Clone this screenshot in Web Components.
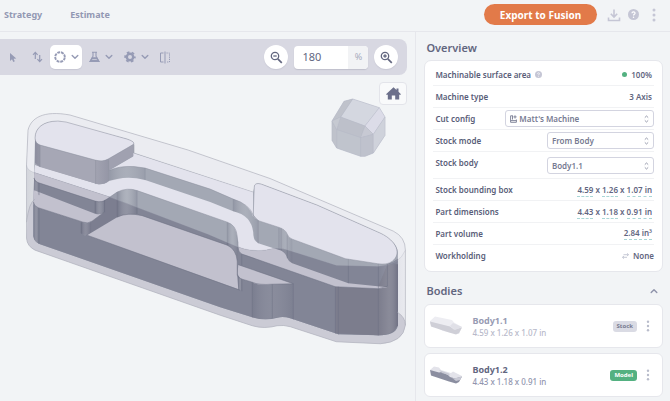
<!DOCTYPE html>
<html lang="en">
<head>
<meta charset="utf-8">
<title>Part overview</title>
<style>
  :root {
    --ink: #62667f;
    --muted: #9298b3;
    --line: #e6e7ec;
    --page: #f2f4f6;
    --bar: #d8d8e2;
  }
  body { margin: 0; background: var(--page); color: var(--ink); font: 600 8px/14px "Noto Sans", sans-serif; }
</style>
</head>
<body>
<cam-app></cam-app>
<script>
const base = `
  *, *::before { box-sizing: border-box; }
  button, input, select { font: inherit; color: inherit; margin: 0; padding: 0; border: 0; background: none; border-radius: 0; outline-offset: 1px; }
  button { cursor: pointer; display: inline-flex; align-items: center; justify-content: center; }
  a { color: inherit; text-decoration: none; }
  h2, h3, p { margin: 0; font: inherit; }
  svg { display: block; flex: none; }
`;
const define = (name, render) => customElements.define(name, class extends HTMLElement {
  connectedCallback() {
    if (this.shadowRoot) return;
    const root = this.attachShadow({ mode: 'open' });
    const tpl = document.createElement('template');
    tpl.innerHTML = `<style>${base}</style>` + render(this);
    root.append(tpl.content.cloneNode(true));
  }
});
const dots = `<svg width="4" height="14" viewBox="0 0 4 14" fill="currentColor"><circle cx="2" cy="2" r="1.5"/><circle cx="2" cy="7" r="1.5"/><circle cx="2" cy="12" r="1.5"/></svg>`;
const chevron = `<svg width="8" height="6" viewBox="0 0 8 6" fill="none" stroke="currentColor" stroke-width="1.4" stroke-linecap="round" stroke-linejoin="round"><path d="M1.2 1.5 4 4.3 6.8 1.5"/></svg>`;

define('app-header', () => `
  <style>
    :host { display: flex; align-items: center; height: 32px; padding: 0 12px 2px 4px; border-bottom: 1px solid var(--line); }
    nav { display: flex; gap: 28px; color: var(--muted); font-size: 9px; font-weight: 700; }
    .actions { display: flex; align-items: center; margin-left: auto; color: #c5c6d5; }
    .export { height: 21px; width: 113px; border-radius: 11px; background: #e27a49; color: #fff; font-weight: 700; font-size: 10px; margin-right: 10px; }
    .help { margin: 0 11px 0 7px; }
    .more { width: 8px; }
  </style>
  <nav><a href="#strategy">Strategy</a><a href="#estimate">Estimate</a></nav>
  <div class="actions">
    <button class="export">Export to Fusion</button>
    <button aria-label="Download"><svg width="14" height="14" viewBox="0 0 14 14" fill="none" stroke="currentColor" stroke-width="1.6"><path d="M7 1.5v7M3.8 5.8 7 9l3.2-3.2M1.5 9.5v3h11v-3"/></svg></button>
    <button class="help" aria-label="Help"><svg width="11" height="11" viewBox="0 0 12 12"><circle cx="6" cy="6" r="6" fill="currentColor"/><path d="M4.3 4.6C4.4 2.6 7.8 2.7 7.7 4.7 7.6 5.8 6 5.8 6 7.2" fill="none" stroke="#fff" stroke-width="1.3"/><circle cx="6" cy="9" r=".8" fill="#fff"/></svg></button>
    <button class="more" aria-label="More">${dots}</button>
  </div>`);

define('view-toolbar', () => `
  <style>
    :host { display: flex; align-items: center; height: 36px; margin-right: 8px; padding: 0 9px 0 6px; border-radius: 0 8px 8px 0; background: var(--bar); color: #969bb5; }
    .tools { display: flex; align-items: center; }
    .tools button { height: 24px; gap: 5px; }
    .cursor { width: 14px; } .swap { width: 14px; margin: 0 6px 0 10px; }
    .tools .active { width: 32px; background: #fff; border-radius: 5px; margin-right: 7px; box-shadow: 0 1px 1px #c8c8d4; }
    .menu { width: 24px; margin-right: 11px; }
    .zoom { display: flex; align-items: center; gap: 6px; margin-left: auto; color: var(--ink); }
    .round { width: 24px; height: 24px; border-radius: 50%; background: #fff; box-shadow: 0 1px 1px #c8c8d4; }
    .field { display: flex; width: 74px; height: 23px; border-radius: 4px; overflow: hidden; background: #fff; box-shadow: 0 1px 1px #c0c0cc; }
    input { flex: 1; min-width: 0; padding: 0 0 0 8px; font-size: 11px; font-weight: 400; }
    .unit { width: 20px; display: grid; place-items: center; background: #f2f3f5; color: #a8abbd; font-size: 9px; font-weight: 400; }
  </style>
  <div class="tools" role="toolbar" aria-label="View tools">
    <button class="cursor" aria-label="Select"><svg width="8" height="11" viewBox="0 0 8 11"><path d="M1 1v8l2-1.8L4.3 10l1.5-.7L4.6 6.7l2.7-.2z" fill="currentColor"/></svg></button>
    <button class="swap" aria-label="Flip"><svg width="11" height="12" viewBox="0 0 11 12" fill="none" stroke="currentColor" stroke-width="1.2"><path d="M3.3 8V1.5M1 3.8l2.3-2.4 2.3 2.4M7.7 4v6.5M5.4 8.2l2.3 2.4L10 8.2"/></svg></button>
    <button class="active" aria-label="Rotate"><svg width="12" height="12" viewBox="0 0 12 12" fill="none" stroke="currentColor" stroke-width="1.9"><circle cx="6" cy="6" r="4.8" stroke-dasharray="2.9 .87" stroke-dashoffset="-.43"/></svg>${chevron}</button>
    <button class="menu" aria-label="Analysis"><svg width="11" height="12" viewBox="0 0 11 12" fill="none" stroke="currentColor" stroke-width="1.1"><path d="M3 1.2h5M4 1.2v4L1 10.5h9L7 5.2v-4"/><path d="M3.2 6.8h4.6l2 3.7H1.2z" fill="currentColor"/><path d="M3.2 8.5h4.6" stroke="#d8d8e2" stroke-width=".7"/></svg>${chevron}</button>
    <button class="menu" aria-label="Settings"><svg width="12" height="12" viewBox="0 0 12 12" fill="none" stroke="currentColor"><circle cx="6" cy="6" r="3.2" stroke-width="2.4"/><circle cx="6" cy="6" r="4.8" stroke-width="1.8" stroke-dasharray="2.6 2.427" stroke-dashoffset="1.3"/></svg>${chevron}</button>
    <button aria-label="Mirror"><svg width="12" height="13" viewBox="0 0 12 13" fill="none" stroke="currentColor"><path d="M4.5 2H1.5v9h3M6 .5v12"/><path d="M7.5 2h3v9h-3" stroke-dasharray="1.2 1"/></svg></button>
  </div>
  <div class="zoom">
    <button class="round" aria-label="Zoom out"><svg width="13" height="13" viewBox="0 0 13 13" fill="none" stroke="currentColor" stroke-width="1.3"><circle cx="5" cy="5" r="3.7"/><path d="M3.3 5h3.4"/><path d="m7.8 7.8 4 4" stroke-width="1.7"/></svg></button>
    <div class="field"><input aria-label="Zoom percentage" value="180"><span class="unit">%</span></div>
    <button class="round" aria-label="Zoom in"><svg width="13" height="13" viewBox="0 0 13 13" fill="none" stroke="currentColor" stroke-width="1.3"><circle cx="5" cy="5" r="3.7"/><path d="M3.3 5h3.4M5 3.3v3.4"/><path d="m7.8 7.8 4 4" stroke-width="1.7"/></svg></button>
  </div>`);

define('model-view', () => `
  <style>
    :host { display: block; position: relative; }
    .scene { width: 100%; height: auto; }
    .upper { --face: #e3e3ed; --wall: #a3a8b4; --side: #a6a7b5; --edge: #8b8f9d; }
    .lower { --face: #c2c1ce; --wall: #828596; --side: #7c7d8d; --edge: #6d7082; }
    .home { position: absolute; top: 7px; right: 8px; width: 28px; height: 23px; background: #f9fafb; border: 1px solid #e3e4ea; border-radius: 4px; color: #6c708b; }
    .cube { position: absolute; top: 22px; right: 28px; }
  </style>
  <svg class="scene" viewBox="0 75 415 320" role="img" aria-label="Part inside its stock">
    <defs>
      <linearGradient id="round"><stop offset="0" stop-color="#50536a" stop-opacity=".3"/><stop offset=".5" stop-color="#fff" stop-opacity=".12"/><stop offset="1" stop-color="#50536a" stop-opacity=".2"/></linearGradient>
      <linearGradient id="end"><stop offset="0" stop-color="#fff" stop-opacity="0"/><stop offset=".5" stop-color="#fff" stop-opacity=".1"/><stop offset="1" stop-color="#50536a" stop-opacity=".3"/></linearGradient>
      <linearGradient id="hull"><stop offset="0" stop-color="#d4d6dc"/><stop offset=".04" stop-color="#dfe1e6"/><stop offset=".96" stop-color="#dfe0e6"/><stop offset="1" stop-color="#e9eaef"/></linearGradient>
      <clipPath id="front"><path d="M20 163H26.5Q27 171 36 173L110 197 208 234 236 246Q250 252 265 250L272 248.500Q280 247 290 250.500L336 265 378 266Q397 264 404 250H410V350H20z"/></clipPath>
      <g id="part">
        <path fill="var(--wall)" d="M35 138C35 128 43 121 58 121L127 139Q134 141 134 145V153L253 192 254 187Q255 182 261 184L317 205 380 233Q397 242 397.500 252V325C396 333 388 335 378 335L338 334 290 318Q283 316 277 317.500 264 321 252 317L220 307 40 244Q33 241 33.500 235V203L34 178z"/>
        <path fill="var(--side)" d="M335 286H378L387 264H397.500V325Q392 335 378 335L335 333z"/>
        <path fill="url(#end)" d="M378 264H397.500V325Q392 335 378 335z"/>
        <path fill="var(--face)" d="M109 170.500Q119 165.500 134 166.500L145 168 210 189 233 199Q249 204 253 217V192L133 153V156.500z"/>
        <path fill="var(--face)" d="M35 165 97 184Q104 185 108 181L117 179Q130 176 145 180L210 202 233 211Q251 215 253 232 253 241 258 243L278 249.500Q285 251 287 258 288 261 292 263L348 283 387 287 378 288.500 335 286.500 241 253.500Q237 251 238 242C236 232 236 225 227 222L210 216 137 190.500Q127 187 117 192L107 199Q102 203 95 201L38 182.500Q34 180 34 176z"/>
        <path fill="var(--face)" stroke="var(--edge)" stroke-width=".5" d="M254 187Q254 182 261 184L317 205 380 233C397 241 401 254 392 261Q387 265 377 263.500L345 258.500 292 239Q288 238 287 234 285 229 278 227L258 220.500Q254 219 253 215z"/>
        <path fill="var(--face)" d="M33.500 190 95 213.500Q101 215 104 212L92 221Q88 224 83 222L38 207.500Q34 206 33.500 202z"/>
        <path fill="var(--face)" d="M87 235 117 217Q127 212 142 215.500L227 245Q236 249 237 261V275L238 289z"/>
        <path fill="var(--face)" d="M238 264.500 293 283.500 272 284Q258 286 252 282L242 279Q238 277 237.500 273z"/>
        <path fill="#50536a" fill-opacity=".12" d="M81 222Q88 226 92 221L104 212 104 200 117 192V217L87 235 81 233z"/>
        <path fill="url(#round)" d="M81 222Q86 224 91 221V232L85 235.500 81 233.500z"/>
        <path fill="url(#round)" d="M95 201Q101 203 104.500 200V212Q101 215 95 213z"/>
        <path fill="url(#round)" d="M33.500 204 39 208V243.500Q34 241 33.500 236zM34 179 39 183V195L34 191z"/>
        <path fill="url(#round)" d="M117 192Q126 187 137 190.500V214.500Q126 213 117 217z"/>
        <path fill="url(#round)" d="M109 170.500Q121 165 145 168V180Q129 176 109 181z" opacity=".6"/>
        <path fill="url(#round)" d="M233 199Q248 203 253 215L258 220V243Q253 241 253 232 251 216 233 211z" opacity=".7"/>
        <path fill="url(#round)" d="M227 222Q237 226 237 236L238 247 237 262Q236 249 227 245z" opacity=".7"/>
        <path fill="url(#round)" d="M278 227Q285 229 287 234L292 239V263Q288 261 287 257 284 250 278 249z" opacity=".6"/>
        <path fill="url(#round)" d="M252 282Q260 285 272 284L293 283.500V319Q282 315 272 318 262 320 252 317z" opacity=".5"/>
        <path fill="url(#round)" d="M238 276 242 279V291L238 289z"/>
        <path fill="var(--side)" d="M35 138Q36 144 40 145L95 160Q103 162 108 159L133 144V156L109 170V181Q104 185 97 184L40 167Q35 165 35 163z"/>
        <path fill="url(#round)" d="M35 138 40 145V167L35 163zM96 160Q103 162 108.500 158V181Q104 185 96 184z"/>
        <path fill="#8e91a4" fill-opacity=".25" d="M108.500 158.500 133.500 143V156L108.500 170.500z"/>
        <path fill="var(--face)" stroke="var(--edge)" stroke-width=".5" d="M35 138C35 128 43 121 58 121L66 122 127 139Q136 142 133 144.500L108 159Q103 162 95 160L40 145Q35 143 35 138z"/>
        <g fill="none" stroke="var(--edge)" stroke-width=".5">
          <path d="M134 144V153L253 192" opacity=".5"/>
          <path d="M109 170.500Q119 165.500 134 166.500L145 168 210 189 233 199Q249 204 253 215L258 220.500M34 178Q34 181 38 182.500L95 201Q102 203 107 199L117 192Q127 187 137 190.500L227 222Q236 225 237 236L238 247Q238 252 242 254L335 286.500 378 288.500 387 286V264M33.500 202Q34 206 38 207.500L83 222Q88 224 92 221L104 212M87 235 240 290M117 217Q127 212 142 215.500L227 245Q236 249 237 261V275Q238 278 242 279L252 282Q258 285 272 284L293 283.500V319M238 264.500 293 283.500"/>
          <path d="M145 168V180M137 190.500V214M117 192V217M233 199V211M227 222V245M252 282V317M272 284V318M335 286.500V333M338 286.500V334M378 264V335M348 259V283M258 220V243M281 228V250M287 235V258M39 208V243.500M39 183V195M40 145V167M95.500 160V184M108.500 160V181M81 222V233M95 201V213M104.500 200V212M241.500 279V291M241.500 254V265"/>
        </g>
      </g>
    </defs>
    <path fill="url(#hull)" d="M26.500 165 28 130C31 118 43 110 70 115L188 150 270 178.500 393 231Q405 237 405 250V325Q403 342 380 343.500L336 341.500 290 326.500Q283 324.500 277 325.500 264 329 252 325.500L220 315 35 250Q27 246 26.500 238z"/>
    <path fill="#ebecf1" d="M26.500 165 28 130C31 118 43 110 70 115L188 150 270 178.500 393 231Q405 237 405 250 399 265 378 266L336 265 290 250.500Q280 247 272 248.500L265 250Q250 252 236 246L208 234 110 197 36 173Q27 171 26.500 165z"/>
    <path fill="#cbcbd5" d="M26.500 238 28 212Q30 201 36 199L397 312Q405 317 405 325 403 342 380 343.500L336 341.500 290 326.500Q283 324.500 277 325.500 264 329 252 325.500L220 315 35 250Q27 246 26.500 238z"/>
    <use href="#part" class="upper"/>
    <g clip-path="url(#front)"><use href="#part" class="lower"/></g>
    <g fill="none" stroke="#a9abb7" stroke-width=".6">
      <path d="M26.500 165 28 130C31 118 43 110 70 115L188 150 270 178.500 393 231Q405 237 405 250V325Q403 342 380 343.500L336 341.500 290 326.500Q283 324.500 277 325.500 264 329 252 325.500L220 315 35 250Q27 246 26.500 238zM26.500 222Q29 202 35 199M397 312Q405 317 405 325"/>
      <path d="M26.500 165Q27 171 36 173L110 197 208 234 236 246Q250 252 265 250L272 248.500Q280 247 290 250.500L336 265 378 266Q399 265 405 250" opacity=".5"/>
    </g>
  </svg>
  <svg class="cube" width="57" height="61" viewBox="330 290 171 183" stroke="#b4b7c4" stroke-width="1" stroke-linejoin="round">
    <path fill="#c1c5cf" d="M398 296 372 303 336 362V420L350 443 422 468H435L460 458 495 405V350L478 322z"/>
    <path fill="#d4d7e0" d="M398 296 478 322 435 377 362 350z"/>
    <path fill="#dcdce8" d="M478 322 495 350 460 402 435 377z"/>
    <path fill="#bdc0ca" d="M362 350 435 377 422 412 350 388z"/>
    <path fill="#c7c9d3" d="M435 377 460 402 422 412z"/>
    <path fill="#c0c4cd" d="M350 388 422 412V468L350 443z"/>
    <path fill="#bfc2cd" d="M422 412 460 402V458L435 468H422z"/>
    <path fill="#cfd2db" d="M460 402 495 350V405L460 458z"/>
    <path fill="#bfc2cb" d="M336 362 350 388V443L336 420zM398 296 372 303 336 362 362 350z"/>
    <path fill="#c6c9d1" d="M336 362 362 350 350 388z"/>
  </svg>
  <button class="home" aria-label="Home view"><svg width="15" height="13" viewBox="0 0 15 13" fill="currentColor"><path d="M7.500.3 10.500 3V1.500h2v3.300L15 7.200l-1 .9-.8-.7V12.500H9.200V8.500H5.800v4H1.800V7.400L1 8.100 0 7.200z"/></svg></button>`);

define('info-card', () => `
  <style>:host { display: block; padding: 3px 8px 4px; background: #fff; border: 1px solid var(--line); border-radius: 7px; }</style>
  <slot></slot>`);

define('info-row', el => `
  <style>
    :host { display: flex; align-items: center; justify-content: space-between; height: 22px; padding: 0 2px; border-bottom: 1px solid #f1f2f4; }
    :host(:last-child) { border-bottom: 0; padding-right: 0; }
    .label, .value { display: flex; align-items: center; gap: 4px; white-space: nowrap; }
    .label { color: #595d78; }
  </style>
  <span class="label">${el.getAttribute('label')}<slot name="hint"></slot></span>
  <span class="value"><slot></slot></span>`);

define('select-row', el => `
  <style>
    :host { display: flex; align-items: center; justify-content: space-between; height: 22px; padding-left: 2px; border-bottom: 1px solid #f1f2f4; }
    :host([tall]) { height: 27px; align-items: stretch; padding-top: 5px; }
    label { color: #595d78; }
    :host([tall]) label { margin-top: -1px; }
    .box { display: grid; grid-template-columns: auto 1fr auto; align-items: center; width: ${el.hasAttribute('wide') ? '68%' : '49%'}; height: 17px; padding: 0 4px; border: 1px solid #d3d4e0; border-radius: 3px; color: #777b92; }
    select { grid-area: 1 / 1 / 2 / 4; appearance: none; width: 100%; height: 15px; padding-left: ${el.hasAttribute('wide') ? 9 : 0}px; }
    .lead { grid-area: 1 / 1; pointer-events: none; }
    .arrows { grid-area: 1 / 3; pointer-events: none; }
  </style>
  <label for="field">${el.getAttribute('label')}</label>
  <div class="box">
    <select id="field"><option>${el.getAttribute('value')}</option></select>
    ${el.hasAttribute('wide') ? '<svg class="lead" width="7" height="8" viewBox="0 0 7 8" fill="none" stroke="currentColor" stroke-width=".9"><path d="M3 .8H.6v6.500h5.800V4.500M2.500 1v3.500M.8 5.600h5.500M5 .3v3.200M3.400 1.900h3.200"/></svg>' : ''}
    <svg class="arrows" width="5" height="8" viewBox="0 0 5 8" fill="none" stroke="#8b8ea3" stroke-width=".9"><path d="M.8 2.600 2.500 1l1.700 1.600M.8 5.400 2.500 7l1.700-1.600"/></svg>
  </div>`);

define('unit-value', () => `
  <style>:host { display: inline-block; line-height: 12px; border-bottom: 1px dashed #a9d6d6; }</style><slot></slot>`);

define('section-title', () => `
  <style>
    :host { display: flex; align-items: center; justify-content: space-between; padding: 0 5px 0 2px; }
    h2 { font-size: 11px; line-height: 15px; font-weight: 600; }
  </style>
  <h2><slot></slot></h2><slot name="action"></slot>`);

define('body-card', el => `
  <style>
    :host { display: flex; align-items: center; gap: 9px; height: 44px; padding: 0 12px 0 4px; background: #fff; border: 1px solid var(--line); border-radius: 6px; }
    .text { flex: 1; }
    h3 { font-size: 9px; line-height: 12px; font-weight: 700; }
    p { font-size: 8px; line-height: 11px; font-weight: 500; color: #9195ae; }
    :host([tone=stock]) h3 { color: #979bb3; }
    :host([tone=stock]) p { color: #b7b9ca; }
    .tag { padding: 0 4px; border-radius: 3px; font-size: 6px; line-height: 11px; font-weight: 700; background: #54b181; color: #fff; }
    :host([tone=stock]) .tag { background: #dadbe4; color: #777a90; }
    button { color: #b9bccb; width: 4px; }
  </style>
  <svg width="34" height="22" viewBox="0 0 34 22">${el.getAttribute('tone') === 'stock'
    ? '<path fill="#ededf2" d="M1 6 6 1.500 23 5 25 7.500 33 12 30 19 14 16 1 9z"/><path fill="#cfcfd7" d="M1 6.500 21 11.500 25 14.500 33 12.500 30 18 27 19.500 20 17.500 2 11.500z"/><path fill="#e0e0e7" d="M21 11 24 8 33 12 26 15z"/>'
    : '<path fill="#e3e3ea" d="M1 6 5 2.500 10 3.500 12 6 22 9 24 7.500 33 12 29 15 22 15 3 8z"/><path fill="#8b8ea0" d="M1 6 10 8.500 13 8 19 11 21 13 26 14.500 33 12.500 30 18 27 19.500 20 17.500 2 11.500z"/><path fill="#c8c9d4" d="M22 13 25 14.500 33 12.500 31 16 27 17zM10 6 20 9.500 21 11.500 13 9z"/>'}</svg>
  <div class="text"><h3>${el.getAttribute('name')}</h3><p>${el.getAttribute('size')}</p></div>
  <span class="tag">${el.getAttribute('tag')}</span>
  <button aria-label="Options for ${el.getAttribute('name')}"><svg width="4" height="12" viewBox="0 0 4 14" fill="currentColor"><circle cx="2" cy="2" r="1.400"/><circle cx="2" cy="7" r="1.400"/><circle cx="2" cy="12" r="1.400"/></svg></button>`);

define('cam-app', () => `
  <style>
    :host { display: grid; grid-template: auto 1fr / minmax(0, 1fr) 38%; min-height: 100vh; }
    app-header { grid-column: 1 / 3; }
    main { padding-top: 7px; overflow: hidden; }
    aside { display: flex; flex-direction: column; padding: 8px 7px 4px 8px; border-left: 1px solid var(--line); }
    info-card { margin: 5px 0 11px; }
    section-title + body-card { margin-top: 6px; }
    body-card + body-card { margin-top: 5px; }
    .dot { width: 5px; height: 5px; border-radius: 50%; background: #54b181; }
    .collapse { color: #8f93aa; transform: rotate(180deg); }
  </style>
  <app-header></app-header>
  <main><view-toolbar></view-toolbar><model-view></model-view></main>
  <aside>
    <section-title>Overview</section-title>
    <info-card>
      <info-row label="Machinable surface area"><svg slot="hint" width="7" height="7" viewBox="0 0 12 12"><circle cx="6" cy="6" r="6" fill="#c5c6d5"/><path d="M4.300 4.600C4.400 2.600 7.800 2.700 7.700 4.700 7.600 5.800 6 5.800 6 7.200" fill="none" stroke="#fff" stroke-width="1.300"/><circle cx="6" cy="9" r=".8" fill="#fff"/></svg><span class="dot"></span>100%</info-row>
      <info-row label="Machine type">3 Axis</info-row>
      <select-row wide label="Cut config" value="Matt's Machine"></select-row>
      <select-row label="Stock mode" value="From Body"></select-row>
      <select-row tall label="Stock body" value="Body1.1"></select-row>
      <info-row label="Stock bounding box"><span><unit-value>4.59</unit-value> x <unit-value>1.26</unit-value> x <unit-value>1.07 in</unit-value></span></info-row>
      <info-row label="Part dimensions"><span><unit-value>4.43</unit-value> x <unit-value>1.18</unit-value> x <unit-value>0.91 in</unit-value></span></info-row>
      <info-row label="Part volume"><unit-value>2.84 in³</unit-value></info-row>
      <info-row label="Workholding"><svg width="7" height="6" viewBox="0 0 7 6" fill="none" stroke="#b9bccb" stroke-width=".8"><path d="M1.500 1.700h5M5 .3l1.500 1.400L5 3M5 4.300H.5M2 3 .5 4.300 2 5.700"/></svg>None</info-row>
    </info-card>
    <section-title>Bodies<button slot="action" class="collapse" aria-label="Collapse bodies">${chevron}</button></section-title>
    <body-card tone="stock" name="Body1.1" size="4.59 x 1.26 x 1.07 in" tag="Stock"></body-card>
    <body-card tone="model" name="Body1.2" size="4.43 x 1.18 x 0.91 in" tag="Model"></body-card>
  </aside>`);
</script>
</body>
</html>
